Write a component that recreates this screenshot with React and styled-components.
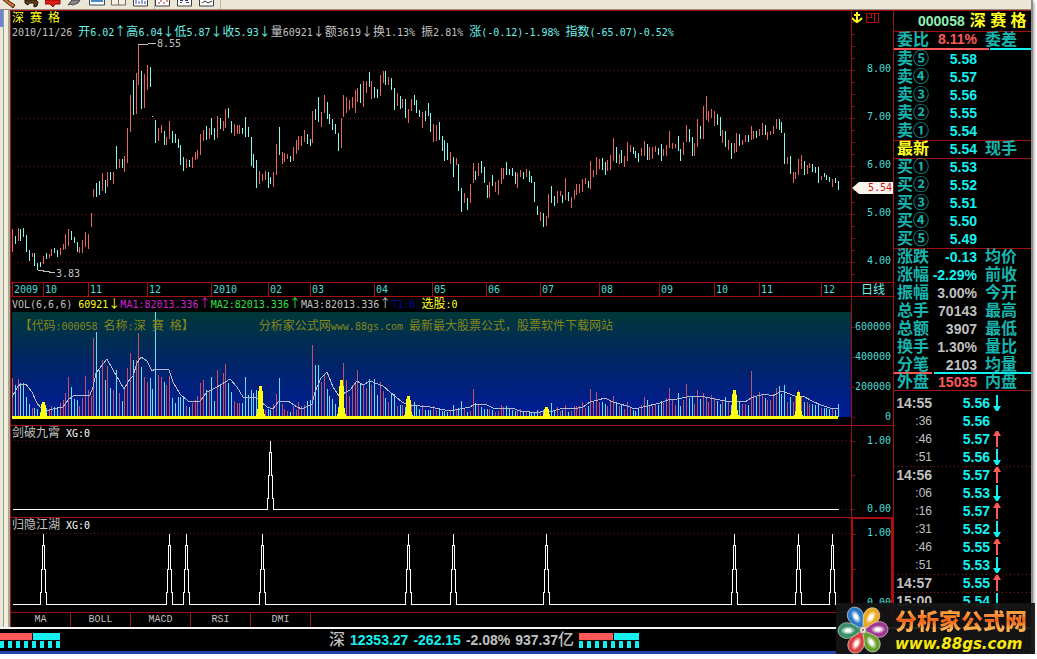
import React from 'react'
import styled, { createGlobalStyle } from 'styled-components'

const RED = '#a01010'
const CYAN = '#14f0f0'
const TEAL = '#18b4ae'
const GREY = '#c0c0c0'
const YELLOW = '#ffff20'
const CORAL = '#ff5858'

const GlobalStyle = createGlobalStyle`
  * { box-sizing: border-box; }
  body {
    margin: 0;
    background: #fff;
    font-family: 'DejaVu Sans Mono', 'Noto Sans CJK SC', monospace;
    font-size: 10px;
  }
  button {
    background: none;
    border: 0;
    padding: 0;
    font: inherit;
    color: inherit;
  }
`

const Window = styled.div`
  position: relative;
  margin-right: 4px;
  border-right: 2px solid #8c8c8c;
  box-shadow: 1px 2px 3px #999;
  background: #000;
`

const Toolbar = styled.header`
  display: flex;
  height: 10px;
  padding: 0 0 0 1px;
  background: #ece6d6;
  border-bottom: 1px solid #9a8a7c;
  overflow: hidden;
`

const ToolButton = styled.button`
  width: 22px;
  height: 9px;
  flex: none;
  border-right: ${p => (p.$last ? '1px solid #b8b4a6' : '0')};

  svg { display: block; }
`

const Body = styled.div`
  display: flex;
`

const Gutter = styled.div`
  flex: 0 0 10px;
  background: linear-gradient(90deg, #ece9d8 0 3px, #8fa08c 3px 4px, #f2eede 4px 8px, #a9a79a 8px 10px);

  &::before {
    content: '';
    display: block;
    width: 3px;
    height: 17px;
    background: #6c84d8;
  }
`

const Charts = styled.main`
  flex: 1;
  min-width: 0;
  border-top: 1px solid ${RED};
  border-left: 1px solid ${RED};
`

const Row = styled.section`
  display: flex;
  border-top: ${p => (p.$first ? '0' : `1px solid ${RED}`)};
`

const Plot = styled.div`
  position: relative;
  flex: 1;
  min-width: 0;
  padding-left: 1px;

  svg {
    display: block;
    width: 100%;
  }
`

const Axis = styled.div`
  position: relative;
  flex: 0 0 42px;
  display: flex;
  flex-direction: column;
  align-items: flex-end;
  gap: ${p => p.$gap || 0}px;
  padding: ${p => p.$top || 0}px 2px 0 0;
  border-left: 1px solid ${RED};
  color: #48dcd8;
  line-height: 12px;
  background: ${p => (p.$step
    ? `repeating-linear-gradient(180deg, #801414 0 1px, transparent 1px ${p.$step}px) 0 ${p.$tick}px / 3px 100% no-repeat`
    : 'none')};

  ${p => p.$active && `
    border: 2px solid #b40c0c;
    border-top-width: 1px;
    border-bottom: 0;
    padding-right: 0;
  `}
`

const AxisIcons = styled.svg`
  position: absolute;
  left: 0;
  top: 0;
`

const PriceTag = styled.div`
  position: absolute;
  left: 0;
  right: 0;
  top: 171px;
  padding-right: 1px;
  background: #f8f4ec;
  color: #d01018;
  text-align: right;
  clip-path: polygon(0 50%, 7px 0, 100% 0, 100% 100%, 7px 100%);
`

const Line = styled.div`
  height: ${p => p.$h || 14}px;
  line-height: ${p => p.$h || 14}px;
  white-space: pre;
  color: ${p => p.$color || GREY};
`

const Ink = styled.span`
  color: ${p => p.$color};
`

const Han = styled.span`
  font-family: 'Noto Sans CJK SC', sans-serif;
  font-size: 12px;
  line-height: 12px;
`

const Banner = styled.div`
  position: absolute;
  top: 22px;
  left: ${p => p.$left}%;
  color: #85851a;
  line-height: 16px;
  white-space: pre;
`

const Dates = styled.div`
  flex: 1;
  min-width: 0;
  display: grid;
  grid-template-columns: 31fr 45fr 59fr 64fr 57fr 42fr 64fr 58fr 54fr 54fr 59fr 60fr 55fr 45fr 62fr 30fr;
  padding-left: 1px;
  height: 13px;
  line-height: 13px;
  color: #48dcd8;

  time {
    min-width: 0;
    padding-left: 1px;
    border-left: 1px solid ${RED};
  }
`

const Tabs = styled.nav`
  display: flex;
  height: 15px;
  border-top: 1px solid ${RED};

  button {
    width: 60px;
    border-right: 1px solid ${RED};
    color: ${GREY};
    font-family: 'Liberation Mono', monospace;
    line-height: 14px;
  }
`

const Sidebar = styled.aside`
  flex: 0 0 138px;
  border-top: 1px solid ${RED};
  border-left: 1px solid ${RED};
  font-family: 'Liberation Sans', 'Noto Sans CJK SC', sans-serif;
  font-weight: bold;
  font-size: 14px;
`

const StockName = styled.h1`
  display: flex;
  gap: 5px;
  margin: 0;
  padding-left: 24px;
  height: 20px;
  line-height: 20px;
  font-size: 14px;
  color: #90f0b8;
  white-space: nowrap;

  span {
    font-size: 16px;
    color: ${YELLOW};
  }
`

// the rule is painted inside the group so every row keeps the same pitch
const Group = styled.div`
  box-shadow: inset 0 1px ${RED};
`

const Quote = styled.div`
  display: grid;
  grid-template-columns: 34px 46px auto;
  padding-left: 3px;
  height: ${p => p.$h || 18}px;
  line-height: ${p => p.$h || 18}px;
  white-space: nowrap;
`

const Label = styled.span`
  color: ${p => p.$color || TEAL};
  font-size: 16px;
  padding-left: ${p => (p.$end ? 8 : 0)}px;
`

const Value = styled.span`
  text-align: right;
  color: ${p => p.$color || CYAN};
`

const Split = styled.div`
  height: 2px;
  margin-top: ${p => (p.$over ? -2 : 0)}px;
  background: linear-gradient(90deg, ${CORAL} 0 ${p => p.$at}%, #000 ${p => p.$at}% ${p => p.$at + 1}%, ${CYAN} ${p => p.$at + 1}%);
`

const Tape = styled.ul`
  list-style: none;
  margin: 0;
  padding: 3px 0 0;
  border-top: 1px solid ${RED};
`

const Tick = styled.li`
  display: grid;
  grid-template-columns: 38px 58px 16px;
  align-items: center;
  height: 18px;
  line-height: 18px;
  text-align: right;
  color: ${CYAN};
  background: ${p => (p.$mark
    ? 'repeating-linear-gradient(90deg, #901818 0 1px, transparent 1px 4px) 0 0 / 100% 1px no-repeat'
    : 'none')};

  svg { margin-left: 3px; }
`

const Time = styled.span`
  color: ${GREY};
  font-size: ${p => (p.$minor ? 12 : 14)}px;
  font-weight: ${p => (p.$minor ? 'normal' : 'bold')};
`

const Status = styled.footer`
  display: flex;
  align-items: center;
  gap: 5px;
  height: 27px;
  border-top: 2px solid #f4f4f4;
  border-bottom: 3px solid #2446a8;
  font: bold 14px/16px 'Liberation Sans', 'Noto Sans CJK SC', sans-serif;
  color: ${GREY};
  white-space: nowrap;

  big {
    font-size: 16px;
    font-weight: 500;
  }
`

const Amount = styled.span`
  display: flex;
  align-items: center;
`

const Meter = styled.div`
  width: 60px;
  height: 15px;
  margin-right: ${p => p.$gap || 0}px;
  background:
    linear-gradient(90deg, ${CORAL} 0 ${p => p.$at}px, #000 ${p => p.$at}px ${p => p.$at + 1}px, ${CYAN} ${p => p.$at + 1}px) 0 0 / 100% 7px no-repeat,
    repeating-linear-gradient(90deg, ${CYAN} 0 4px, #000 4px 8px) 0 8px / 100% 7px no-repeat;
`

const SiteLogo = styled.a`
  position: absolute;
  right: -4px;
  bottom: -3px;
  width: 199px;
  height: 54px;
  display: flex;
  background: rgba(20, 20, 20, 0.94);
  text-decoration: none;
`

const LogoText = styled.span`
  display: flex;
  flex-direction: column;
  padding: 0 0 0 5px;
  white-space: nowrap;

  b {
    font: 900 22px/32px 'Noto Sans CJK SC', sans-serif;
    background: linear-gradient(180deg, #ffa040 30%, #f06018 55%, #ffb050 80%);
    -webkit-background-clip: text;
    background-clip: text;
    color: transparent;
  }
  i {
    font: italic bold 15px/18px 'DejaVu Sans', sans-serif;
    color: #f8e810;
  }
`

// x, high, low, top of volume bar, r(ise) or f(all)
const BARS = `
12 229 252 378 r,15 236 244 385 f,18 228 241 379 r,20 229 241 383 f,23 228 237 383 f,26 235 252 397 f,29 250 261 404 f,
32 253 257 408 r,34 253 266 408 f,37 263 270 409 f,40 262 267 412 f,43 256 264 407 r,46 253 259 408 f,49 254 258 410 r,
51 249 256 406 r,54 248 253 407 f,57 250 257 407 f,60 248 255 403 r,63 244 250 400 r,65 234 249 393 r,68 229 246 377 r,
71 231 240 387 f,74 237 243 399 f,77 242 252 400 f,79 247 253 406 r,82 240 253 398 r,85 232 247 376 r,88 234 249 390 r,
91 213 227 396 r,93 189 197 338 r,96 183 197 332 f,99 181 195 370 f,102 173 191 360 r,105 180 193 380 f,107 172 187 366 r,
110 172 180 388 f,113 172 184 390 r,116 146 169 370 f,119 159 168 393 r,122 159 168 401 f,124 156 172 387 r,127 128 163 368 r,
130 95 132 353 r,133 80 115 360 f,136 73 114 360 r,138 44 85 333 r,141 71 109 367 f,144 74 108 377 r,147 65 90 382 r,
150 67 87 378 f,152 116 117 389 f,155 120 143 312 f,158 128 141 375 r,161 125 133 377 r,164 131 145 382 f,166 137 145 385 r,
169 121 139 376 r,172 131 143 398 f,175 134 143 403 f,178 139 148 397 f,180 145 165 397 f,183 157 171 397 f,186 159 168 406 r,
189 160 167 407 f,192 157 168 403 r,195 152 160 400 r,197 150 159 396 r,200 134 155 383 r,203 130 141 380 r,206 126 140 390 f,
209 128 139 390 r,211 118 135 377 f,214 128 140 401 f,217 116 138 370 r,220 118 129 385 f,223 121 131 373 r,225 109 128 364 r,
228 108 118 383 f,231 121 133 392 f,234 124 136 401 r,237 125 134 403 r,239 125 134 403 r,242 128 134 403 f,245 117 137 377 f,
248 127 137 395 f,251 137 166 390 f,253 154 168 393 f,256 160 188 390 f,259 171 184 404 r,262 174 181 405 r,265 171 180 410 r,
268 172 188 409 f,270 177 184 410 f,273 172 187 404 r,276 144 175 394 r,279 127 155 378 f,282 152 164 404 r,284 153 162 409 r,
287 154 159 411 r,290 156 162 412 f,293 147 161 406 r,296 140 154 410 r,298 136 150 402 r,301 136 146 406 r,304 130 142 405 r,
307 134 144 401 f,310 139 146 400 f,312 111 143 345 r,315 109 120 365 f,318 97 122 365 f,321 112 127 382 r,324 95 113 375 r,
327 102 119 389 f,329 114 124 396 f,332 119 130 399 f,335 124 134 404 f,338 133 151 407 f,341 118 148 380 r,343 95 117 363 r,
346 97 113 380 r,349 100 110 396 r,352 97 108 385 r,355 90 113 382 r,357 88 102 370 r,360 84 103 383 f,363 81 107 385 r,
366 81 93 388 r,369 72 87 379 f,371 81 99 385 r,374 87 98 379 f,377 89 98 395 f,380 75 96 382 r,383 71 83 391 r,
385 71 85 398 f,388 77 85 402 r,391 78 90 394 f,394 88 110 394 f,397 93 106 406 r,400 96 109 405 f,402 99 108 405 r,
405 99 118 407 f,408 109 123 403 r,411 99 111 404 r,414 95 105 402 f,416 100 113 406 f,419 110 117 409 f,422 112 128 405 r,
425 111 121 410 f,428 103 116 410 f,430 113 132 410 f,433 124 142 406 r,436 125 141 410 r,439 122 140 409 f,442 136 151 411 f,
444 140 161 411 f,447 143 160 412 f,450 152 164 411 r,453 157 177 405 f,456 158 165 410 r,458 164 191 408 f,461 188 212 401 f,
464 193 203 409 r,467 198 210 412 f,470 184 203 411 r,473 163 183 389 r,475 171 180 403 f,478 163 176 404 r,481 161 173 407 f,
484 167 183 409 f,487 185 198 409 f,489 182 198 409 r,492 175 186 410 f,495 182 192 412 r,498 180 195 411 r,501 168 184 405 r,
503 168 179 407 r,506 162 175 406 f,509 169 175 408 f,512 168 176 410 f,515 172 184 411 f,517 173 188 411 r,520 170 177 409 r,
523 172 179 412 f,526 169 177 411 r,529 171 182 412 f,531 176 183 412 f,534 182 202 412 f,537 206 215 410 f,540 212 221 412 r,
543 213 227 410 f,546 216 226 409 r,548 194 218 409 r,551 186 203 403 f,554 196 206 411 f,557 191 203 407 r,560 191 196 411 r,
562 195 203 410 f,565 178 200 405 r,568 192 201 412 f,571 197 208 411 r,574 190 199 406 r,576 184 195 406 r,579 184 193 406 r,
582 179 192 402 r,585 178 184 408 r,588 181 188 406 f,590 161 189 389 r,593 170 177 402 r,596 157 175 392 r,599 159 169 402 r,
602 158 170 402 f,605 162 175 404 f,607 160 171 406 r,610 155 170 401 r,613 138 161 396 r,616 147 163 403 f,619 154 164 406 r,
621 150 163 405 f,624 156 167 409 r,627 142 161 402 r,630 145 152 408 r,633 147 154 410 f,635 151 158 411 f,638 153 162 409 f,
641 148 156 405 r,644 141 156 397 r,647 144 160 400 f,649 147 160 406 r,652 147 159 406 r,655 146 152 405 r,658 148 155 405 f,
661 144 161 401 f,663 149 156 403 r,666 145 156 398 r,669 131 148 388 r,672 143 149 400 r,675 144 148 405 r,678 136 151 393 f,
680 149 161 406 f,683 142 155 400 r,686 125 142 384 r,689 129 142 398 f,692 137 156 397 f,694 143 156 404 r,697 119 147 390 r,
700 126 139 399 f,703 106 139 393 r,706 96 120 398 r,708 111 122 402 r,711 109 118 395 r,714 111 126 398 r,717 114 125 401 f,
720 117 136 404 f,722 130 143 400 r,725 131 147 397 f,728 140 150 402 r,731 143 159 405 f,734 143 153 396 r,736 133 152 394 r,
739 134 146 402 f,742 140 145 404 r,745 135 142 404 r,748 135 142 405 f,751 126 140 371 r,753 131 139 395 r,756 131 138 396 f,
759 129 136 392 r,762 123 135 394 r,765 125 135 398 f,767 132 140 400 r,770 131 135 400 r,773 126 134 394 r,776 119 129 388 r,
779 119 130 386 f,781 122 133 394 f,784 133 164 385 f,787 157 164 402 r,790 156 174 397 f,793 172 183 402 r,795 172 179 396 r,
798 159 175 390 r,801 155 169 396 r,804 161 175 402 f,807 165 174 402 r,809 163 168 404 r,812 164 172 404 f,815 167 173 405 f,
818 167 183 403 f,821 176 180 408 r,824 173 177 408 f,826 175 180 408 f,829 177 182 409 f,832 179 187 408 r,835 178 183 410 f,
838 181 190 404 f`
  .split(',')
  .map(row => row.trim().split(' '))
  .map(([x, high, low, vol, dir]) => ({ x: +x, high: +high, low: +low, vol: +vol, up: dir === 'r' }))

const AVERAGE = '12,397 15,392 18,386 21,384 26,384 32,392 37,403 40,407 45,411 53,409 63,407 68,400 74,395 83,395 90,395 93,387 96,373 103,364 107,359 113,370 120,382 124,389 130,379 133,376 137,363 141,357 147,361 152,371 155,369 161,369 169,370 173,382 180,394 188,401 200,401 207,392 217,387 230,379 237,387 243,397 257,398 267,407 273,409 279,401 288,401 297,407 302,409 312,404 315,392 321,378 327,372 333,387 339,396 350,390 357,381 363,385 370,381 383,386 390,392 402,402 408,405 420,406 430,407 440,409 450,411 460,409 470,407 475,404 485,404 493,408 503,408 512,408 520,411 530,412 540,412 553,411 563,408 573,409 583,407 590,402 598,400 605,398 613,402 627,406 635,409 643,407 660,403 668,400 677,399 687,397 695,396 705,397 715,399 725,401 735,401 745,402 751,398 757,396 765,394 773,396 781,391 787,393 795,396 803,396 812,401 821,405 830,408 838,408'

const SIGNALS = [[43, 402], [260, 386], [341, 380], [408, 396], [546, 407], [734, 390], [798, 392]]

// every signal climbs in four steps, one pixel narrower each time
const spikes = (xs, top, base) => {
  const h = (base - top) / 6
  return `M12 ${base}` + xs.map(x =>
    `H${x - 3}V${base - h}H${x - 2}V${base - 3 * h}H${x - 1}V${top + h}H${x}V${top}V${top + h}H${x + 1}V${base - 3 * h}H${x + 2}V${base - h}H${x + 3}V${base}`
  ).join('') + 'H838'
}

// latin and digits are set narrower than the chinese glyphs
const Mixed = ({ children }) =>
  String(children).split(/([\u2190-\u2193\u3000-\u9fff\uff00-\uffef]+)/).map((run, i) =>
    (i % 2 ? <Han key={i}>{run}</Han> : run))

const DottedLine = ({ y }) => (
  <path d={`M14 ${y}.5H851`} stroke="#701414" strokeDasharray="1 3" />
)

const Chart = ({ top, height, children }) => (
  <svg height={height} viewBox={`12 ${top} 839 ${height}`} preserveAspectRatio="none" shapeRendering="crispEdges" fill="none">
    {children}
  </svg>
)

const PriceChart = () => (
  <Chart top={39} height={243}>
    {[70, 118, 166, 214, 262].map(y => <DottedLine key={y} y={y} />)}
    {BARS.map(b => (
      <rect key={b.x} x={b.x} y={b.high} width="1" height={b.low - b.high} fill={b.up ? '#e8645e' : '#84f8f0'} />
    ))}
    <path d="M138 44.5H148M148 43.5H156M38 270.5H44M43 271.5H50M49 272.5H55" stroke={GREY} />
    <text x="157" y="47" fill={GREY}>8.55</text>
    <text x="56" y="277" fill={GREY}>3.83</text>
  </Chart>
)

const VolumeChart = () => (
  <Chart top={310} height={115}>
    <defs>
      <linearGradient id="sea" x2="0" y2="1">
        <stop offset="0" stopColor="#003838" />
        <stop offset="0.5" stopColor="#002468" />
        <stop offset="1" stopColor="#001c98" />
      </linearGradient>
    </defs>
    <rect x="12" y="312" width="839" height="105" fill="url(#sea)" />
    {BARS.map(b => (
      <rect key={b.x} x={b.x} y={b.vol} width="1" height={417 - b.vol} fill={b.up ? '#c4506c' : '#6cdcf0'} />
    ))}
    <polyline points={AVERAGE} stroke="#b4bccc" />
    <path d="M12 417.5H838" stroke="#ffff10" strokeWidth="3" />
    {SIGNALS.map(([x, y]) => {
      const third = (417 - y) / 3
      return (
        <path
          key={x}
          d={`M${x - 4} 417L${x - 2} ${417 - third}V${y + third}L${x - 1} ${y}H${x + 2}L${x + 3} ${y + third}V${417 - third}L${x + 5} 417z`}
          fill="#ffff10"
        />
      )
    })}
  </Chart>
)

const Signal = ({ at, top, base, from, height }) => (
  <Chart top={from} height={height}>
    <DottedLine y={top} />
    <DottedLine y={base} />
    <path d={spikes(at, top, base)} stroke="#fff" transform="translate(0.5 0.5)" />
  </Chart>
)

const Arrow = ({ up }) => (
  <svg width="9" height="16" viewBox="0 0 9 16" fill={up ? CORAL : CYAN}>
    {up ? <path d="M3 0h2l3 5H5v11H3V5H0z" /> : <path d="M3 16h2l3-5H5V0H3v11H0z" />}
  </svg>
)

const SELL = [['⑤', '5.58'], ['④', '5.57'], ['③', '5.56'], ['②', '5.55'], ['①', '5.54']]
const BUY = [['①', '5.53'], ['②', '5.52'], ['③', '5.51'], ['④', '5.50'], ['⑤', '5.49']]
const STATS = [
  ['涨跌', '-0.13', '均价', CYAN],
  ['涨幅', '-2.29%', '前收', CYAN],
  ['振幅', '3.00%', '今开', GREY],
  ['总手', '70143', '最高', GREY],
  ['总额', '3907', '最低', GREY],
  ['换手', '1.30%', '量比', GREY],
  ['分笔', '2103', '均量', GREY],
]
const TICKS = [
  ['14:55', '5.56', 'down'],
  [':36', '5.56'],
  [':46', '5.57', 'up'],
  [':51', '5.56', 'down'],
  ['14:56', '5.57', 'up'],
  [':06', '5.53', 'down'],
  [':16', '5.57', 'up'],
  [':31', '5.52', 'down'],
  [':46', '5.55', 'up'],
  [':51', '5.53', 'down'],
  ['14:57', '5.55', 'up'],
  ['15:00', '5.54', 'down'],
]
const MONTHS = ['2009', '10', '11', '12', '2010', '02', '03', '04', '05', '06', '07', '08', '09', '10', '11', '12']

const TOOLS = [
  ['Draw', <path key="a" d="M2 0l3-1 9 6-2 3z" fill="#d07030" stroke="#402010" />],
  ['Palette', <path key="a" d="M2 0v3l3 2 1-2h5v4l3-1 1-4-2-2z" fill="#604018" stroke="#201008" />],
  ['Alert', <path key="a" d="M0 0h15v4h-5l-2 3-3-3H0z" fill="#e81810" stroke="#701008" />],
  ['Pin', <path key="a" d="M1 5l2-1 3 1 5-2 2-3H5z" fill="#888" stroke="#444" />],
  ['Single view', <g key="a"><path d="M.5-2h15v7h-15z" fill="#fff" stroke="#305068" /><path d="M2 0h12v2H2z" fill="#4888c0" /></g>],
  ['Split view', <path key="a" d="M.5-2h7v7h-7zM7.500-2h7v7h-7z" fill="#f4f0e4" stroke="#706c60" />],
  ['Bars', <g key="a"><path d="M.5-2h14v8h-14z" fill="#fff" stroke="#404040" /><path d="M3 0v4M6 1v3M9 0v4M12 1v3" stroke="#2848b0" /></g>, true],
  ['Points', <g key="a"><path d="M.5-2h14v8h-14z" fill="#fff" stroke="#404040" /><path d="M3 3h2M6 0v2M8 3h2M11 1h2" stroke="#b02020" /></g>],
  ['Table', <g key="a"><path d="M.5-2h14v8h-14z" fill="#fff" stroke="#404040" /><path d="M3 .5h3M3 2.500h2M8 .5h3M9 2.500h3" stroke="#303880" /></g>],
  ['Trend', <g key="a"><path d="M.5-2h14v8h-14z" fill="#fff" stroke="#404040" /><path d="M3 3l3-2 3 2 4-2" fill="none" stroke="#303030" /></g>, true],
]

const PETALS = [
  [-28, '#2878c8'],
  [32, '#e8a820'],
  [88, '#a03890'],
  [146, '#68a030'],
  [206, '#d84040'],
  [268, '#389068'],
]

const Flower = () => (
  <svg width="54" height="54" viewBox="-27 -27 54 54">
    <defs>
      <radialGradient id="petal">
        <stop offset="0.3" stopColor="#fff" />
        <stop offset="1" stopColor="#fff" stopOpacity="0.1" />
      </radialGradient>
    </defs>
    {PETALS.map(([angle, color]) => (
      <g key={angle} transform={`rotate(${angle})`}>
        <path d="M0-2C-7-9-11-17-5-23Q0-27 5-23C11-17 7-9 0-2z" fill={color} stroke="#e8e4dc" strokeWidth="0.6" />
        <ellipse cy="-15" rx="4" ry="7" fill="url(#petal)" />
      </g>
    ))}
    <circle r="3" fill="#e8e0d0" />
    <circle r="1" fill="#806040" />
  </svg>
)

const App = () => (
  <>
    <GlobalStyle />
    <Window>
      <Toolbar>
        {TOOLS.map(([name, icon, last]) => (
          <ToolButton key={name} aria-label={name} $last={last}>
            <svg width="17" height="9" viewBox="0 0 17 9">{icon}</svg>
          </ToolButton>
        ))}
      </Toolbar>

      <Body>
        <Gutter />
        <Charts>
          <Row $first>
            <Plot>
              <Line $color={YELLOW}><Mixed>深 赛 格</Mixed></Line>
              <Line>
                2010/11/26{' '}
                <Ink $color="#6cf0e8"><Mixed>开6.02↑高6.04↓低5.87↓收5.93↓</Mixed></Ink>
                <Mixed>量60921↓额3619↓换1.13% 振2.81% </Mixed>
                <Ink $color="#6cf0e8"><Mixed>涨(-0.12)-1.98% 指数(-65.07)-0.52%</Mixed></Ink>
              </Line>
              <PriceChart />
            </Plot>
            <Axis $top={52} $gap={36} $step={12} $tick={11}>
              <AxisIcons width="30" height="14" viewBox="0 0 30 14" fill="none">
                <path d="M5 1v10M2 4h6M0 7l2 2 3 2 3-2 2-2" stroke={YELLOW} strokeWidth="2" />
                <path d="M14.500 2.500h5v4h-5zM19.500 2.500h7v9h-12v-5h5zM22.500 2.500v9" stroke="#b01010" />
              </AxisIcons>
              {['8.00', '7.00', '6.00', '5.00', '4.00'].map(v => <span key={v}>{v}</span>)}
              <PriceTag>5.54</PriceTag>
            </Axis>
          </Row>

          <Row>
            <Dates>{MONTHS.map((m, i) => <time key={i}>{m}</time>)}</Dates>
            <Axis><Line $h={13} $color="#6cf0e8"><Mixed>日线 </Mixed></Line></Axis>
          </Row>

          <Row>
            <Plot>
              <Line $h={13}>
                VOL(6,6,6) <Ink $color={YELLOW}><Mixed>60921↓</Mixed></Ink>
                <Ink $color="#d020d0"><Mixed>MA1:82013.336↑</Mixed></Ink>
                <Ink $color="#30e040"><Mixed>MA2:82013.336↑</Mixed></Ink>
                <Mixed>MA3:82013.336↑</Mixed>
                <Ink $color="#0808a0">T1:0</Ink>{' '}
                <Ink $color={YELLOW}><Mixed>选股:0</Mixed></Ink>
              </Line>
              <VolumeChart />
              <Banner $left={1}><Mixed>【代码:000058 名称:深 赛 格】</Mixed></Banner>
              <Banner $left={29.5}><Mixed>分析家公式网www.88gs.com 最新最大股票公式，股票软件下载网站</Mixed></Banner>
            </Plot>
            <Axis $top={24} $gap={18} $step={30} $tick={30}>
              {['600000', '400000', '200000', '0'].map(v => <span key={v}>{v}</span>)}
            </Axis>
          </Row>

          <Row>
            <Plot>
              <Line><Mixed>剑破九霄 </Mixed><Ink $color="#fff">XG:0</Ink></Line>
              <Signal at={[270]} from={440} height={77} top={440} base={509} />
            </Plot>
            <Axis $top={9} $gap={56} $step={34} $tick={15}>
              <span>1.00</span>
              <span>0.00</span>
            </Axis>
          </Row>

          <Row>
            <Plot>
              <Line><Mixed>归隐江湖 </Mixed><Ink $color="#fff">XG:0</Ink></Line>
              <Signal at={[43, 169, 186, 262, 408, 453, 546, 734, 798, 832]} from={532} height={80} top={533} base={604} />
            </Plot>
            <Axis $active $top={8} $gap={58} $step={35} $tick={15}>
              <span>1.00</span>
              <span>0.00</span>
            </Axis>
          </Row>

          <Tabs>
            {['MA', 'BOLL', 'MACD', 'RSI', 'DMI'].map(name => <button key={name}>{name}</button>)}
          </Tabs>
        </Charts>

        <Sidebar>
          <StockName>000058 <span>深 赛 格</span></StockName>
          <Group>
            <Quote $h={17}>
              <Label>委比</Label>
              <Value $color={CORAL}>8.11%</Value>
              <Label $end>委差</Label>
            </Quote>
            <Split $at={69} />
          </Group>
          {SELL.map(([n, price]) => (
            <Quote key={n}><Label>卖{n}</Label><Value>{price}</Value></Quote>
          ))}
          <Group>
            <Quote>
              <Label $color={YELLOW}>最新</Label>
              <Value>5.54</Value>
              <Label $end>现手</Label>
            </Quote>
          </Group>
          <Group>
            {BUY.map(([n, price]) => (
              <Quote key={n}><Label>买{n}</Label><Value>{price}</Value></Quote>
            ))}
          </Group>
          <Group>
            {STATS.map(([label, value, next, color]) => (
              <Quote key={label}>
                <Label>{label}</Label>
                <Value $color={color}>{value}</Value>
                <Label $end>{next}</Label>
              </Quote>
            ))}
            <Split $at={28} $over />
            <Quote $h={16}>
              <Label>外盘</Label>
              <Value $color={CORAL}>15035</Value>
              <Label $end>内盘</Label>
            </Quote>
          </Group>
          <Tape>
            {TICKS.map(([time, price, dir], i) => (
              <Tick key={i} $mark={i > 0 && time.length > 3}>
                <Time $minor={time.length < 4}>{time}</Time>
                <span>{price}</span>
                {dir && <Arrow up={dir === 'up'} />}
              </Tick>
            ))}
          </Tape>
        </Sidebar>
      </Body>

      <Status>
        <Meter $at={32} $gap={264} />
        <big>深</big>
        <Ink $color={CYAN}>12353.27</Ink>
        <Ink $color={CYAN}>-262.15</Ink>
        <span>-2.08%</span>
        <Amount>937.37<big>亿</big></Amount>
        <Meter $at={34} />
      </Status>

      <SiteLogo href="http://www.88gs.com">
        <Flower />
        <LogoText>
          <b>分析家公式网</b>
          <i>www.88gs.com</i>
        </LogoText>
      </SiteLogo>
    </Window>
  </>
)

export default App
